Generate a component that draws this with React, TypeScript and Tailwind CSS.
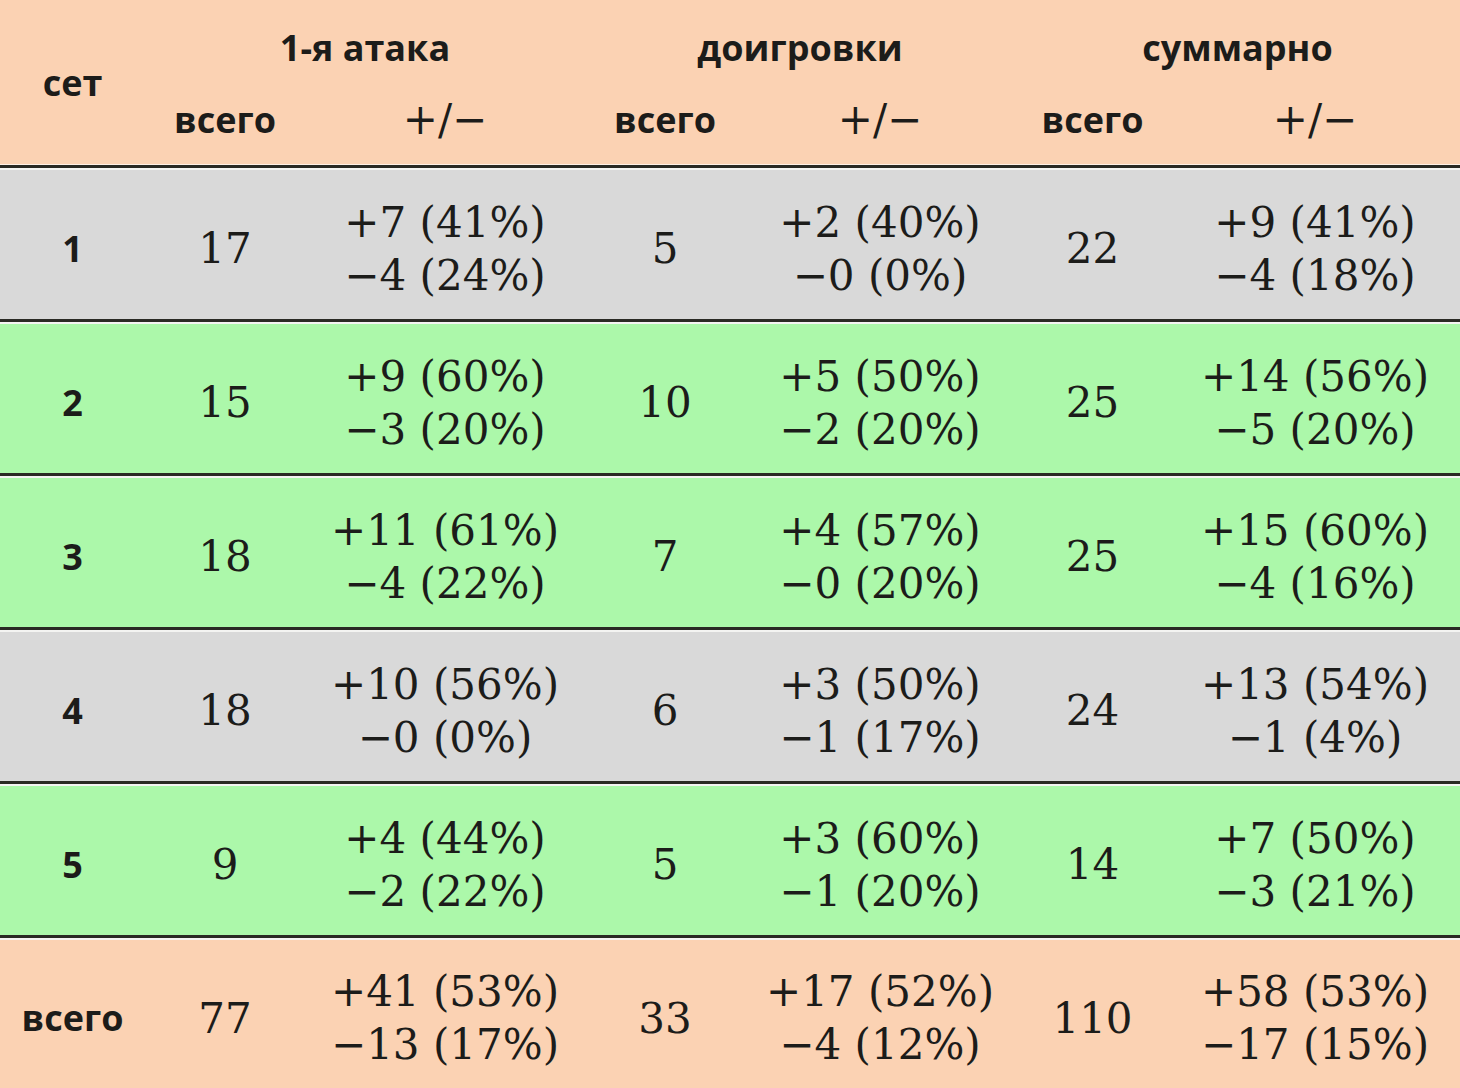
const rows = [
  { set: "1", bg: "bg-[#d9d9d9]", a: "17", ap: ["+7 (41%)", "−4 (24%)"], b: "5", bp: ["+2 (40%)", "−0 (0%)"], c: "22", cp: ["+9 (41%)", "−4 (18%)"] },
  { set: "2", bg: "bg-[#acf8aa]", a: "15", ap: ["+9 (60%)", "−3 (20%)"], b: "10", bp: ["+5 (50%)", "−2 (20%)"], c: "25", cp: ["+14 (56%)", "−5 (20%)"] },
  { set: "3", bg: "bg-[#acf8aa]", a: "18", ap: ["+11 (61%)", "−4 (22%)"], b: "7", bp: ["+4 (57%)", "−0 (20%)"], c: "25", cp: ["+15 (60%)", "−4 (16%)"] },
  { set: "4", bg: "bg-[#d9d9d9]", a: "18", ap: ["+10 (56%)", "−0 (0%)"], b: "6", bp: ["+3 (50%)", "−1 (17%)"], c: "24", cp: ["+13 (54%)", "−1 (4%)"] },
  { set: "5", bg: "bg-[#acf8aa]", a: "9", ap: ["+4 (44%)", "−2 (22%)"], b: "5", bp: ["+3 (60%)", "−1 (20%)"], c: "14", cp: ["+7 (50%)", "−3 (21%)"] },
];

const cols = "grid grid-cols-[145px_160px_280px_160px_270px_155px_290px]";
const sans = "font-['Open_Sans',sans-serif] font-bold text-[36px]";
const serif = "font-['DejaVu_Serif',serif] text-[42px]";

function Pair({ lines }: { lines: string[] }) {
  return (
    <div className={`flex flex-col items-center justify-center leading-[53px] ${serif}`}>
      {lines.map((l) => (
        <span key={l} className="whitespace-pre">{l}</span>
      ))}
    </div>
  );
}

function BodyRow({ r, footer }: { r: typeof rows[number]; footer?: boolean }) {
  return (
    <div className={`border-t-[3px] border-[#2a2a24] ${r.bg} ${footer ? "flex-1" : "h-[154px]"}`}>
      <div className={`${cols} h-full border-t-2 border-[#f4f4f2] pt-2`}>
        <div className={`flex items-center justify-center ${sans}`}>{r.set}</div>
        <div className={`flex items-center justify-center ${serif}`}>{r.a}</div>
        <Pair lines={r.ap} />
        <div className={`flex items-center justify-center ${serif}`}>{r.b}</div>
        <Pair lines={r.bp} />
        <div className={`flex items-center justify-center ${serif}`}>{r.c}</div>
        <Pair lines={r.cp} />
      </div>
    </div>
  );
}

export default function App() {
  const total = { set: "всего", bg: "bg-[#fbd2b3]", a: "77", ap: ["+41 (53%)", "−13 (17%)"], b: "33", bp: ["+17 (52%)", "−4 (12%)"], c: "110", cp: ["+58 (53%)", "−17 (15%)"] };
  return (
    <div className="w-[1460px] h-[1088px] flex flex-col text-[#1c1c1a] bg-[#fbd2b3]">
      <div className={`${cols} grid-rows-[96px_69px] h-[165px] bg-[#fbd2b3] border-b border-[#fff1e6]`}>
        <div className={`row-span-2 flex items-center justify-center ${sans}`}>сет</div>
        <div className={`col-span-2 flex items-center justify-center ${sans}`}>1-я атака</div>
        <div className={`col-span-2 flex items-center justify-center ${sans}`}>доигровки</div>
        <div className={`col-span-2 flex items-center justify-center ${sans}`}>суммарно</div>
        {[0, 1, 2].map((i) => [
          <div key={`v${i}`} className={`flex justify-center leading-[48px] ${sans}`}>всего</div>,
          <div key={`p${i}`} className={`flex justify-center leading-[48px] ${serif}`}>+/−</div>,
        ])}
      </div>
      {rows.map((r) => (
        <BodyRow key={r.set} r={r} />
      ))}
      <BodyRow r={total} footer />
    </div>
  );
}
